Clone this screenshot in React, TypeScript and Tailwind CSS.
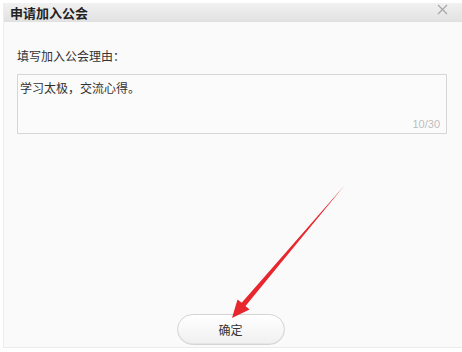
import React from 'react';

export default function App() {
  return (
    <div
      className="relative w-[462px] h-[352px] bg-white overflow-hidden"
      style={{ fontFamily: '"Noto Sans CJK SC", "Noto Sans", sans-serif' }}
    >
      <div className="ml-[3px] mt-[3px] h-[345px] flex flex-col border-l border-b border-[#ececec] bg-[#fafafa]">
        {/* Title bar */}
        <div className="h-[19px] flex items-center justify-between pl-[6px] pr-[12px] bg-gradient-to-b from-[#f1f1f1] to-[#e2e2e2] border-b border-[#e0e0e0]">
          <span className="text-[13px] font-bold text-[#222] leading-none">申请加入公会</span>
          <svg width="11" height="11" viewBox="0 0 11 11" className="-mt-[6px] mr-[2px]">
            <path d="M1 1L10 10M10 1L1 10" stroke="#a8a8a8" strokeWidth="1.3" />
          </svg>
        </div>

        {/* Body */}
        <div className="flex-1 flex flex-col px-[13px]">
          <div className="mt-[28px] text-[12px] text-[#333] leading-none">填写加入公会理由：</div>
          <div className="mt-[12px] mr-[2px] h-[60px] border border-[#d6d6d6] bg-[#fbfbfb] relative">
            <div className="pl-[2px] pt-[5px] text-[12px] text-[#333] leading-[16px]">学习太极，交流心得。</div>
            <div className="absolute right-[6px] bottom-[3px] text-[11px] text-[#bdbdbd] leading-none" style={{ fontFamily: '"Liberation Sans", sans-serif' }}>10/30</div>
          </div>

          <div className="flex-1" />

          <div className="flex justify-center mb-[2px]">
            <button className="w-[108px] h-[31px] rounded-full border border-[#d4d4d4] bg-gradient-to-b from-white to-[#f0f0f0] shadow-[inset_0_-1px_0_#e6e6e6] text-[12px] text-[#333] ml-[-5px]">
              确定
            </button>
          </div>
        </div>
      </div>

      {/* Red annotation arrow */}
      <svg className="absolute left-0 top-0 pointer-events-none" width="462" height="352" viewBox="0 0 462 352">
        <defs>
          <filter id="soft" x="-10%" y="-10%" width="120%" height="120%">
            <feGaussianBlur stdDeviation="0.5" />
          </filter>
        </defs>
        <polygon
          points="344,186 245.5,306 249.5,309.5 232,318 237.5,299.5 241.7,302.7"
          fill="#e8262d"
          filter="url(#soft)"
        />
      </svg>
    </div>
  );
}
